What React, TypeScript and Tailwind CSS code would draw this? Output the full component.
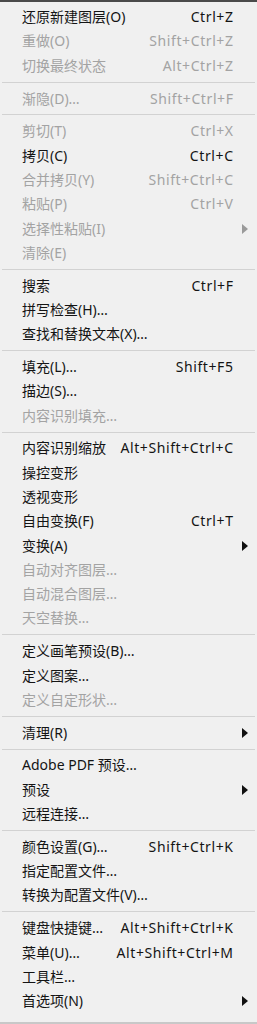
import React from "react";

type Item =
  | { sep: true }
  | { label: string; keys?: string; off?: boolean; sub?: boolean; sep?: false };

const items: Item[] = [
  { label: "还原新建图层(O)", keys: "Ctrl+Z" },
  { label: "重做(O)", keys: "Shift+Ctrl+Z", off: true },
  { label: "切换最终状态", keys: "Alt+Ctrl+Z", off: true },
  { sep: true },
  { label: "渐隐(D)…", keys: "Shift+Ctrl+F", off: true },
  { sep: true },
  { label: "剪切(T)", keys: "Ctrl+X", off: true },
  { label: "拷贝(C)", keys: "Ctrl+C" },
  { label: "合并拷贝(Y)", keys: "Shift+Ctrl+C", off: true },
  { label: "粘贴(P)", keys: "Ctrl+V", off: true },
  { label: "选择性粘贴(I)", off: true, sub: true },
  { label: "清除(E)", off: true },
  { sep: true },
  { label: "搜索", keys: "Ctrl+F" },
  { label: "拼写检查(H)…" },
  { label: "查找和替换文本(X)…" },
  { sep: true },
  { label: "填充(L)…", keys: "Shift+F5" },
  { label: "描边(S)…" },
  { label: "内容识别填充…", off: true },
  { sep: true },
  { label: "内容识别缩放", keys: "Alt+Shift+Ctrl+C" },
  { label: "操控变形" },
  { label: "透视变形" },
  { label: "自由变换(F)", keys: "Ctrl+T" },
  { label: "变换(A)", sub: true },
  { label: "自动对齐图层…", off: true },
  { label: "自动混合图层…", off: true },
  { label: "天空替换…", off: true },
  { sep: true },
  { label: "定义画笔预设(B)…" },
  { label: "定义图案…" },
  { label: "定义自定形状…", off: true },
  { sep: true },
  { label: "清理(R)", sub: true },
  { sep: true },
  { label: "Adobe PDF 预设…" },
  { label: "预设", sub: true },
  { label: "远程连接…" },
  { sep: true },
  { label: "颜色设置(G)…", keys: "Shift+Ctrl+K" },
  { label: "指定配置文件…" },
  { label: "转换为配置文件(V)…" },
  { sep: true },
  { label: "键盘快捷键…", keys: "Alt+Shift+Ctrl+K" },
  { label: "菜单(U)…", keys: "Alt+Shift+Ctrl+M" },
  { label: "工具栏…" },
  { label: "首选项(N)", sub: true },
];

function Arrow({ off }: { off?: boolean }) {
  return (
    <svg width="6" height="10" viewBox="0 0 6 10" className="block">
      <path d="M0 0 L6 5 L0 10 Z" fill={off ? "#9a9a9a" : "#111111"} />
    </svg>
  );
}

export default function App() {
  return (
    <div
      className="w-[257px] h-[1024px] bg-[#f0f0f0] flex flex-col overflow-hidden"
      style={{ fontFamily: "'Noto Sans', 'Noto Sans CJK SC', sans-serif" }}
    >
      <div className="h-[2px] bg-[#4a4a4a] shrink-0" />
      <div className="flex flex-col pt-[3px] flex-1">
        {items.map((it, i) =>
          it.sep ? (
            <div key={i} className="h-[8.5px] flex items-center px-[2px]">
              <div className="h-px w-full bg-[#d2d2d2]" />
            </div>
          ) : (
            <div
              key={i}
              className={`h-[24.3px] flex items-center pl-[22px] pr-[24px] text-[14px] leading-none ${
                it.off ? "text-[#a3a3a3]" : "text-[#141414]"
              }`}
            >
              <span className="flex-1 whitespace-nowrap">{it.label}</span>
              {it.keys && (
                <span className="whitespace-nowrap tracking-[0.6px] -mr-[0.6px]">{it.keys}</span>
              )}
              {it.sub && (
                <span className="w-0 relative">
                  <span className="absolute left-[9px] top-[-5px]">
                    <Arrow off={it.off} />
                  </span>
                </span>
              )}
            </div>
          )
        )}
      </div>
      <div className="h-[2px] bg-[#c8c8c8] shrink-0" />
    </div>
  );
}
